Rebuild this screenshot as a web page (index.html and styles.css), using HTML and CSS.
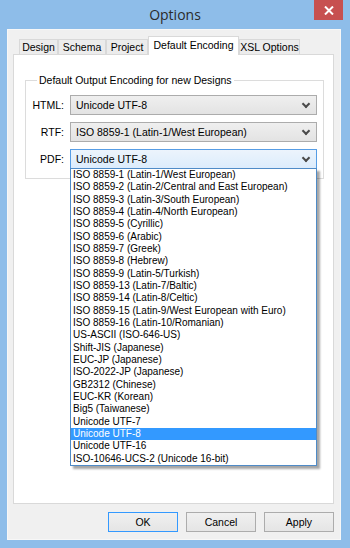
FILE: index.html
```html
<!DOCTYPE html>
<html lang="en">

<head>
    <meta charset="UTF-8">
    <meta name="viewport" content="width=device-width, initial-scale=1.0">
    <title>Options</title>
    <link rel="stylesheet" href="styles.css">
</head>

<body>
    <div class="window">
        <!-- 标题栏 -->
        <div class="titlebar">
            <div class="title">Options</div>
            <a class="close-btn" href="javascript:;">
                <svg width="10" height="9" viewBox="0 0 10 9">
                    <path d="M1 0.5 L9 8.5 M9 0.5 L1 8.5" stroke="#fff" stroke-width="2" fill="none" />
                </svg>
            </a>
        </div>
        <div class="client">
            <ul class="tabs">
                <li class="tab tab-design">Design</li>
                <li class="tab tab-schema">Schema</li>
                <li class="tab tab-project">Project</li>
                <li class="tab tab-active">Default Encoding</li>
                <li class="tab tab-xsl">XSL Options</li>
            </ul>
            <div class="tab-panel">
                <fieldset class="group">
                    <legend>Default Output Encoding for new Designs</legend>
                    <div class="enc-row">
                        <label>HTML:</label>
                        <div class="combo"><span>Unicode UTF-8</span><i class="arrow"></i></div>
                    </div>
                    <div class="enc-row">
                        <label>RTF:</label>
                        <div class="combo"><span>ISO 8859-1 (Latin-1/West European)</span><i class="arrow"></i></div>
                    </div>
                    <div class="enc-row">
                        <label>PDF:</label>
                        <div class="combo combo-open"><span>Unicode UTF-8</span><i class="arrow"></i>
                            <!-- 下拉列表 -->
                            <ul class="drop-list">
                                <li>ISO 8859-1 (Latin-1/West European)</li>
                                <li>ISO 8859-2 (Latin-2/Central and East European)</li>
                                <li>ISO 8859-3 (Latin-3/South European)</li>
                                <li>ISO 8859-4 (Latin-4/North European)</li>
                                <li>ISO 8859-5 (Cyrillic)</li>
                                <li>ISO 8859-6 (Arabic)</li>
                                <li>ISO 8859-7 (Greek)</li>
                                <li>ISO 8859-8 (Hebrew)</li>
                                <li>ISO 8859-9 (Latin-5/Turkish)</li>
                                <li>ISO 8859-13 (Latin-7/Baltic)</li>
                                <li>ISO 8859-14 (Latin-8/Celtic)</li>
                                <li>ISO 8859-15 (Latin-9/West European with Euro)</li>
                                <li>ISO 8859-16 (Latin-10/Romanian)</li>
                                <li>US-ASCII (ISO-646-US)</li>
                                <li>Shift-JIS (Japanese)</li>
                                <li>EUC-JP (Japanese)</li>
                                <li>ISO-2022-JP (Japanese)</li>
                                <li>GB2312 (Chinese)</li>
                                <li>EUC-KR (Korean)</li>
                                <li>Big5 (Taiwanese)</li>
                                <li>Unicode UTF-7</li>
                                <li class="selected">Unicode UTF-8</li>
                                <li>Unicode UTF-16</li>
                                <li>ISO-10646-UCS-2 (Unicode 16-bit)</li>
                            </ul>
                        </div>
                    </div>
                </fieldset>
            </div>
            <div class="buttons">
                <a class="btn btn-default" href="javascript:;">OK</a>
                <a class="btn" href="javascript:;">Cancel</a>
                <a class="btn" href="javascript:;">Apply</a>
            </div>
        </div>
    </div>
</body>

</html>
```

FILE: styles.css
```css
ul,
li,
div,
span,
a,
label,
fieldset,
legend {
    padding: 0px;
    margin: 0px;
}

body {
    margin: 0px;
    font-family: "Liberation Sans", Arial, sans-serif;
    font-size: 10px;
    color: #000000;
}

a {
    text-decoration: none;
    color: #000000;
}

ul {
    list-style: none;
}

.window {
    width: 350px;
    height: 548px;
    background: #8ebde9;
    display: flex;
    flex-direction: column;
}

/* 标题栏 */
.titlebar {
    height: 29px;
    display: flex;
    align-items: flex-start;
}

.title {
    flex: 1;
    padding-left: 36px;
    text-align: center;
    font-family: "Open Sans", sans-serif;
    font-size: 14px;
    line-height: 30px;
    color: #2b2b2b;
}

.close-btn {
    width: 29px;
    height: 20px;
    margin-right: 7px;
    background: #c75050;
    display: flex;
    align-items: center;
    justify-content: center;
}

.client {
    flex: 1;
    margin: 0px 9px 8px 7px;
    background: #f0f0f0;
    border: 1px solid #f7f7f7;
    padding: 6px 6px 0px 5px;
    display: flex;
    flex-direction: column;
}

/* 选项卡 */
.tabs {
    display: flex;
    align-items: flex-end;
    height: 18px;
    padding-left: 6px;
    position: relative;
    z-index: 1;
}

.tab {
    height: 15px;
    line-height: 15px;
    border: 1px solid #d9d9d9;
    border-bottom: none;
    background: #ececec;
    text-align: center;
    white-space: nowrap;
    box-sizing: border-box;
    font-size: 10.5px;
}

.tab-design {
    width: 39px;
}

.tab-schema {
    width: 48px;
}

.tab-project {
    width: 42px;
}

.tab-xsl {
    width: 61px;
}

.tab-active {
    width: 91px;
    height: 19px;
    line-height: 16px;
    margin-bottom: -1px;
    background: #ffffff;
}

.tab-panel {
    height: 450px;
    box-sizing: border-box;
    background: #ffffff;
    border: 1px solid #d9d9d9;
    padding: 19px 10px 0px 11px;
}

.group {
    border: 1px solid #dcdcdc;
    height: 105px;
    box-sizing: border-box;
    padding: 9px 6px 0px 6px;
}

.group legend {
    margin-left: 5px;
    padding: 0px 2px;
    line-height: 12px;
    font-size: 10.5px;
}

.enc-row {
    display: flex;
    align-items: center;
    gap: 6px;
    margin-bottom: 7px;
    font-size: 10.5px;
}

.enc-row label {
    width: 32px;
    text-align: right;
}

.combo {
    position: relative;
    width: 247px;
    height: 20px;
    box-sizing: border-box;
    border: 1px solid #acacac;
    background: linear-gradient(#efefef, #e3e3e3);
    display: flex;
    align-items: center;
    padding-left: 5px;
}

.combo span {
    flex: 1;
}

.combo .arrow {
    width: 4px;
    height: 4px;
    margin: 0px 7px 3px 0px;
    border-right: 2px solid #4a4a4a;
    border-bottom: 2px solid #4a4a4a;
    transform: rotate(45deg);
}

.combo-open {
    border-color: #569de5;
    background: linear-gradient(#ecf4fc, #dcecfc);
}

/* 下拉列表 */
.drop-list {
    position: absolute;
    top: 18px;
    left: -1px;
    width: 247px;
    box-sizing: border-box;
    border: 1px solid #4f8bc7;
    background: #ffffff;
    box-shadow: 3px 3px 2px rgba(0, 0, 0, 0.35);
    z-index: 10;
    font-size: 10px;
}

.drop-list li {
    height: 12.33px;
    line-height: 12.33px;
    padding-left: 2px;
    white-space: nowrap;
}

.drop-list li.selected {
    background: #3399ff;
    color: #ffffff;
}

/* 底部按钮 */
.buttons {
    display: flex;
    justify-content: flex-end;
    gap: 8px;
    padding-top: 8px;
    font-size: 10.5px;
}

.btn {
    width: 70px;
    height: 20px;
    box-sizing: border-box;
    border: 1px solid #acacac;
    background: linear-gradient(#f0f0f0, #e5e5e5);
    text-align: center;
    line-height: 18px;
}

.btn-default {
    border-color: #3399ff;
}
```
